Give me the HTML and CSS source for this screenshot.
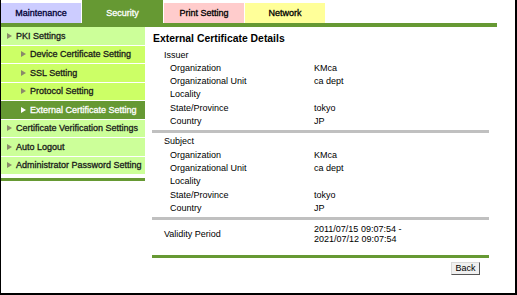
FILE: index.html
```html
<!DOCTYPE html>
<html lang="en">
<head>
    <meta charset="UTF-8">
    <title>External Certificate Details</title>
    <link rel="stylesheet" href="styles.css">
</head>
<body>
    <div class="frame">
        <!-- Tabs -->
        <ul class="tabs">
            <li class="tab tab-maintenance">Maintenance</li>
            <li class="tab tab-security active">Security</li>
            <li class="tab tab-print">Print Setting</li>
            <li class="tab tab-network">Network</li>
        </ul>
        <div class="tab-bar"></div>

        <div class="main">
            <!-- Menu -->
            <nav class="side">
                <ul class="menu">
                    <li class="item">PKI Settings</li>
                    <li class="item sub">Device Certificate Setting</li>
                    <li class="item sub">SSL Setting</li>
                    <li class="item sub">Protocol Setting</li>
                    <li class="item sub current">External Certificate Setting</li>
                    <li class="item">Certificate Verification Settings</li>
                    <li class="item">Auto Logout</li>
                    <li class="item">Administrator Password Setting</li>
                </ul>
                <div class="side-end"></div>
            </nav>

            <!-- Content -->
            <div class="content">
                <h2 class="title">External Certificate Details</h2>

                <div class="group">
                    <div class="group-title">Issuer</div>
                    <div class="row"><span class="label">Organization</span><span>KMca</span></div>
                    <div class="row"><span class="label">Organizational Unit</span><span>ca dept</span></div>
                    <div class="row"><span class="label">Locality</span><span></span></div>
                    <div class="row"><span class="label">State/Province</span><span>tokyo</span></div>
                    <div class="row"><span class="label">Country</span><span>JP</span></div>
                </div>
                <div class="rule"></div>

                <div class="group">
                    <div class="group-title">Subject</div>
                    <div class="row"><span class="label">Organization</span><span>KMca</span></div>
                    <div class="row"><span class="label">Organizational Unit</span><span>ca dept</span></div>
                    <div class="row"><span class="label">Locality</span><span></span></div>
                    <div class="row"><span class="label">State/Province</span><span>tokyo</span></div>
                    <div class="row"><span class="label">Country</span><span>JP</span></div>
                </div>
                <div class="rule"></div>

                <div class="validity">
                    <span class="validity-label">Validity Period</span>
                    <span class="validity-value">2011/07/15 09:07:54 -<br>2021/07/12 09:07:54</span>
                </div>
                <div class="rule green"></div>

                <div class="buttons">
                    <button class="btn">Back</button>
                </div>
            </div>
        </div>
    </div>
</body>
</html>
```

FILE: styles.css
```css
* {
    margin: 0;
    padding: 0;
    box-sizing: border-box;
}

body {
    font-family: "Liberation Sans", Arial, sans-serif;
    font-size: 9px;
    color: #000;
    background: #fff;
}

.frame {
    width: 517px;
    height: 295px;
    border-left: 1px solid #000;
    border-right: 2px solid #000;
    border-bottom: 2px solid #000;
    overflow: hidden;
}

/* Tabs */
.tabs {
    list-style: none;
    display: flex;
    align-items: flex-end;
    gap: 1px;
    height: 23px;
}

.tab {
    width: 80px;
    height: 20px;
    display: flex;
    align-items: center;
    justify-content: center;
    font-size: 9px;
    -webkit-text-stroke: 0.3px currentColor;
}

.tab-maintenance { background: #ccccff; color: #000033; }
.tab-print { background: #ffcccc; color: #000; }
.tab-network { background: #ffff99; color: #000; }

.tab.active {
    width: 81px;
    height: 23px;
    padding-top: 3px;
    background: #669933;
    color: #fff;
}

.tab-bar {
    width: 496px;
    height: 4px;
    background: #669933;
}

/* Layout */
.main {
    display: flex;
}

.side {
    width: 144px;
}

.menu {
    list-style: none;
}

.menu .item {
    position: relative;
    height: 18.5px;
    border-bottom: 1px solid #fff;
    background: #ccff99;
    display: flex;
    align-items: center;
    padding-left: 15px;
    color: #1a1a1a;
    -webkit-text-stroke: 0.3px currentColor;
}

.menu .item::before {
    content: "";
    position: absolute;
    left: 6px;
    top: 50%;
    margin-top: -3px;
    border-left: 5px solid #8a8a6a;
    border-top: 3px solid transparent;
    border-bottom: 3px solid transparent;
}

.menu .sub {
    background: #ccff66;
    padding-left: 29px;
}

.menu .sub::before {
    left: 20px;
}

.menu .current {
    background: #669933;
    color: #fff;
}

.menu .current::before {
    border-left-color: #fff;
}

.side-end {
    margin-top: 3px;
    height: 3px;
    background: #669933;
}

.content {
    width: 337px;
    margin-left: 7px;
}

.title {
    margin-top: 5px;
    padding-left: 1px;
    font-size: 10.4px;
    line-height: 14px;
    font-weight: bold;
}

.group {
    padding: 2.5px 0 1.5px;
    line-height: 13.33px;
}

.group-title {
    padding-left: 12px;
}

.row {
    display: grid;
    grid-template-columns: 162px 1fr;
}

.row .label {
    padding-left: 18px;
}

.rule {
    height: 3px;
    background: #c0c0c0;
}

.rule.green {
    background: #669933;
}

.validity {
    display: grid;
    grid-template-columns: 162px 1fr;
    align-items: center;
    padding: 4.5px 0 10.5px;
    line-height: 10px;
}

.validity-label {
    padding-left: 12px;
}

.buttons {
    display: flex;
    justify-content: flex-end;
    padding: 4px 9px 0 0;
}

.btn {
    width: 29px;
    height: 13px;
    font-family: "Liberation Sans", Arial, sans-serif;
    font-size: 9px;
    line-height: 11px;
    background: #f0f0f0;
    color: #000;
    border: 1px solid;
    border-color: #d8d8d8 #555 #555 #d8d8d8;
}
```
